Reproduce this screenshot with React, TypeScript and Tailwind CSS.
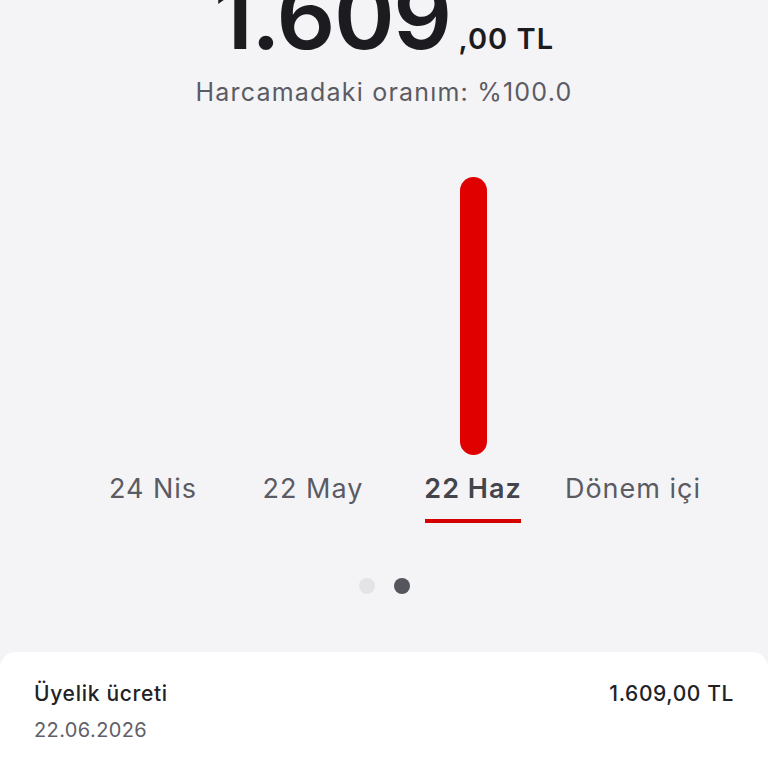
import React from 'react';

const tabs = [
  { label: '24 Nis', active: false },
  { label: '22 May', active: false },
  { label: '22 Haz', active: true },
  { label: 'Dönem içi', active: false },
];

function App(): JSX.Element {
  return (
    <div className="w-[768px] h-[768px] overflow-hidden bg-[#f4f4f6] flex flex-col" style={{ fontFamily: 'Inter, "Noto Sans", sans-serif' }}>
      {/* total amount */}
      <div className="flex justify-center items-baseline -mt-[30px]">
        <span className="text-[92px] leading-[92px] font-semibold text-[#1c1c20] tracking-[-1.5px]">1.609</span>
        <span className="ml-[8px] text-[29px] leading-[29px] font-semibold text-[#1c1c20] tracking-[1px]">,00 TL</span>
      </div>
      <div className="mt-[15px] text-center text-[25px] leading-[30px] text-[#5b5b63] tracking-[1.2px]">
        Harcamadaki oranım: %100.0
      </div>

      {/* chart */}
      <div className="ml-[73px] w-[640px] grid grid-cols-4 mt-[70px]">
        {tabs.map((t) => (
          <div key={t.label} className="flex flex-col items-center">
            <div className="h-[278px] flex items-end">
              {t.active && <div className="w-[27px] h-[278px] rounded-full bg-[#e00000]" />}
            </div>
            <div
              className={
                'mt-[18px] text-[27px] leading-[32px] whitespace-nowrap tracking-[1px] ' +
                (t.active ? 'font-semibold text-[#44444c]' : 'text-[#5b5b63]')
              }
            >
              {t.label}
            </div>
            <div className={'mt-[14px] h-[4px] w-[96px] ' + (t.active ? 'bg-[#d40000]' : 'bg-transparent')} />
          </div>
        ))}
      </div>

      {/* pager dots */}
      <div className="flex justify-center gap-[19px] mt-[55px]">
        <div className="w-[16px] h-[16px] rounded-full bg-[#e4e4e8]" />
        <div className="w-[16px] h-[16px] rounded-full bg-[#55555e]" />
      </div>

      {/* detail card */}
      <div className="mt-[58px] flex-1 bg-white rounded-t-[16px] px-[34px] pt-[28px]">
        <div className="flex justify-between items-center leading-[28px]">
          <span className="text-[21px] font-medium text-[#222226] tracking-[0.7px]">Üyelik ücreti</span>
          <span className="text-[21px] font-medium text-[#222226] tracking-[0.6px]">1.609,00 TL</span>
        </div>
        <div className="mt-[8px] text-[20px] leading-[28px] text-[#606068] tracking-[0.4px]">22.06.2026</div>
      </div>
    </div>
  );
}

export default App;
